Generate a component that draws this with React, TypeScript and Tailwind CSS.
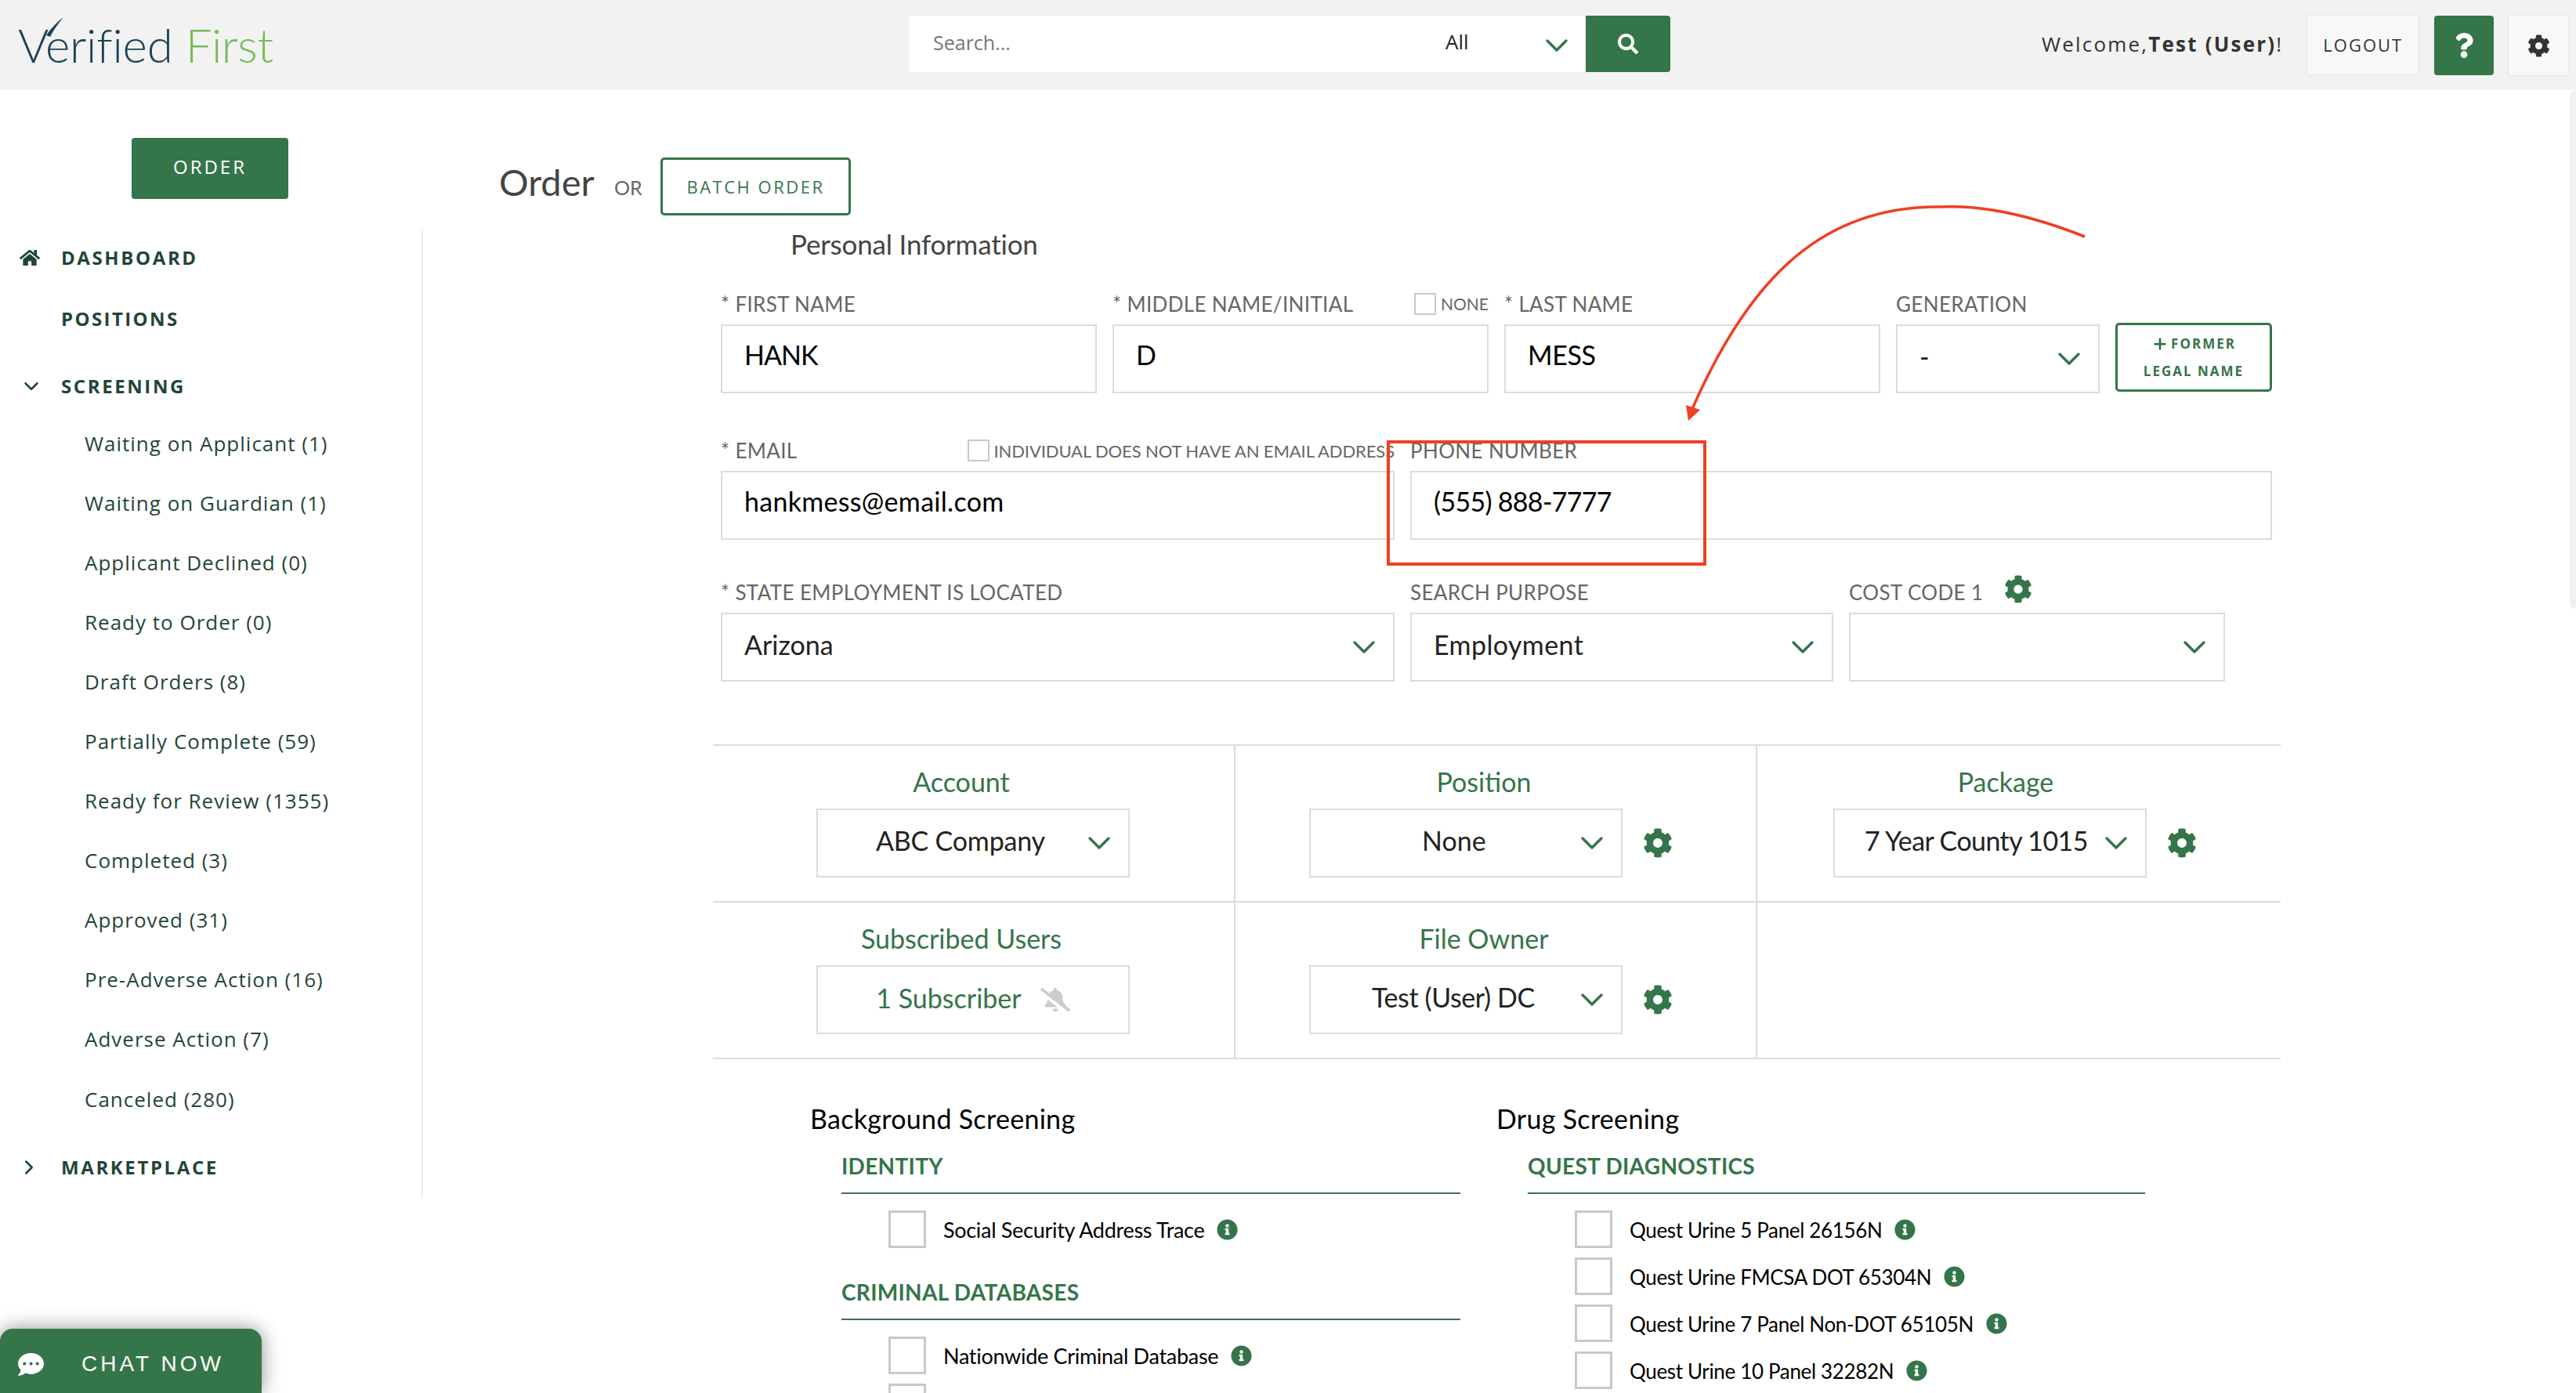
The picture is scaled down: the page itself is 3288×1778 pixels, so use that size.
/**
 * App - Verified First order page
 */

import type { ReactNode } from 'react';
import { ChevronDown, ChevronRight, Plus } from 'lucide-react';
import { FaBellSlash, FaCog, FaCommentDots, FaHome, FaInfoCircle, FaQuestion, FaSearch } from 'react-icons/fa';

const SCREENING_ITEMS = [
  'Waiting on Applicant (1)',
  'Waiting on Guardian (1)',
  'Applicant Declined (0)',
  'Ready to Order (0)',
  'Draft Orders (8)',
  'Partially Complete (59)',
  'Ready for Review (1355)',
  'Completed (3)',
  'Approved (31)',
  'Pre-Adverse Action (16)',
  'Adverse Action (7)',
  'Canceled (280)',
];

const QUEST_ITEMS = [
  'Quest Urine 5 Panel 26156N',
  'Quest Urine FMCSA DOT 65304N',
  'Quest Urine 7 Panel Non-DOT 65105N',
  'Quest Urine 10 Panel 32282N',
];

function Chevron({ className = '' }: { className?: string }) {
  return <ChevronDown size={48} strokeWidth={1.7} className={`shrink-0 text-[#35754a] ${className}`} />;
}

function Label({ children, className = '' }: { children: ReactNode; className?: string }) {
  return <div className={`h-[30px] text-[26px] leading-[30px] tracking-[0.35px] text-[#666] whitespace-nowrap ${className}`}>{children}</div>;
}

function SmallCheck() {
  return <span className="inline-block h-[28px] w-[28px] shrink-0 border-2 border-[#c9c9c9] bg-white" />;
}

function TextBox({ value, className = '' }: { value: string; className?: string }) {
  return (
    <div className={`flex h-[88px] items-center border-2 border-[#dcdcdc] pb-[12px] pl-[28px] text-[34px] text-black ${className}`}>
      {value}
    </div>
  );
}

function SelectBox({ value, className = '' }: { value: string; className?: string }) {
  return (
    <div className={`flex h-[88px] items-center justify-between border-2 border-[#dcdcdc] pl-[28px] pr-[13px] text-[34px] text-[#222] ${className}`}>
      <span className="pb-[8px]">{value}</span>
      <Chevron />
    </div>
  );
}

function CellSelect({ value, textClass }: { value: string; textClass: string }) {
  return (
    <div className="flex h-[88px] w-[400px] items-center justify-between border-2 border-[#dcdcdc] pr-[13px] text-[34px] text-[#222]">
      <span className={`pb-[8px] whitespace-nowrap ${textClass}`}>{value}</span>
      <Chevron />
    </div>
  );
}

function Cell({ title, children, width, indent, border = true }: { title?: string; children?: ReactNode; width: string; indent: string; border?: boolean }) {
  return (
    <div className={`${width} ${border ? 'border-r-2 border-[#dcdcdc]' : ''}`}>
      {title && (
        <>
          <div className="mt-[26px] h-[40px] w-[634px] text-center text-[34px] leading-[40px] text-[#35754a]">{title}</div>
          <div className={`mt-[14px] flex items-center gap-[26px] ${indent}`}>{children}</div>
        </>
      )}
    </div>
  );
}

function CheckRow({ label, className = '', textClass = 'text-[27px] tracking-[-0.3px]' }: { label: string; className?: string; textClass?: string }) {
  return (
    <div className={`flex h-[48px] items-center pl-[60px] ${className}`}>
      <span className="h-[48px] w-[48px] shrink-0 border-[3px] border-[#c8c8c8] bg-white" />
      <span className={`ml-[22px] whitespace-nowrap pt-[2px] text-black ${textClass}`}>{label}</span>
      <FaInfoCircle size={27} className="ml-[16px] shrink-0 text-[#35754a]" />
    </div>
  );
}

function GroupHeading({ children, className = '' }: { children: ReactNode; className?: string }) {
  return (
    <div className={`border-b-2 border-[#35754a] pb-[19px] ${className}`}>
      <div className="h-[30px] text-[28px] font-bold leading-[30px] tracking-[0.3px] text-[#35754a]">{children}</div>
    </div>
  );
}

export default function App() {
  return (
    <div className="relative h-screen w-full overflow-hidden bg-white font-['Lato','Open_Sans',sans-serif]">
      {/* Top bar */}
      <header className="flex h-[115px] items-start bg-[#f2f2f2]">
        <div className="relative ml-[23px] mt-[21px] flex w-[1137px] font-light">
          <div className="text-[60px] leading-[72px] tracking-[-0.2px] text-[#1b4257]">
            Verified <span className="tracking-[-0.4px] text-[#76bc57]">First</span>
          </div>
          <svg className="absolute left-0 top-0" width="60" height="40" viewBox="0 0 60 40">
            <path d="M36 24 C42 15 50 7 58 1 C52 8 46 16 41 26 Z" fill="#1b4257" />
          </svg>
        </div>
        <div className="mt-[20px] flex h-[72px] w-[972px] items-stretch bg-white">
          <div className="flex w-[685px] items-center pb-[2px] pl-[31px] font-['Open_Sans',sans-serif] text-[25px] text-[#777]">Search...</div>
          <div className="flex w-[179px] pb-[8px] font-['Open_Sans',sans-serif] text-[26px] text-[#222]">
            <span className="mt-[14px]">All</span>
            <Chevron className="ml-auto mr-[13px] mt-[14px]" />
          </div>
          <div className="flex w-[108px] items-center justify-center rounded-r-[4px] bg-[#35754a] text-white">
            <FaSearch size={26} />
          </div>
        </div>
        <div className="mt-[36px] ml-[474px] whitespace-nowrap font-['Open_Sans',sans-serif] text-[26px] leading-[40px] tracking-[2.2px] text-[#333]">
          Welcome,<b>Test (User)</b>!
        </div>
        <div className="ml-[29px] mt-[18px] flex h-[79px] w-[146px] items-center justify-center rounded-[6px] border-2 border-[#ebebeb] bg-[#f8f8f8] font-['Open_Sans',sans-serif] text-[22px] tracking-[2px] text-[#333]">
          LOGOUT
        </div>
        <div className="ml-[18px] mt-[20px] flex h-[76px] w-[76px] items-center justify-center rounded-[4px] bg-[#35754a] text-white">
          <FaQuestion size={32} />
        </div>
        <div className="ml-[17px] mt-[18px] flex h-[80px] w-[80px] items-center justify-center rounded-[6px] border-2 border-[#ebebeb] bg-[#f8f8f8] text-[#333]">
          <FaCog size={29} />
        </div>
      </header>

      <div className="flex">
        {/* Sidebar */}
        <aside className="w-[540px] shrink-0 font-['Open_Sans',sans-serif]">
          <div className="ml-[168px] mt-[61px] flex h-[78px] w-[200px] items-center justify-center rounded-[4px] bg-[#35754a] pb-[4px] text-[24px] tracking-[3px] text-white">
            ORDER
          </div>
          <nav className="mt-[40px] h-[1234px] border-r-2 border-[#ececec] text-[#1f4636]">
            <div className="relative flex h-[70px] items-center pl-[78px] text-[24px] font-bold tracking-[2.6px]">
              <FaHome size={26} className="absolute left-[25px]" />
              DASHBOARD
            </div>
            <div className="flex h-[86px] items-center pl-[78px] text-[24px] font-bold tracking-[2.4px]">POSITIONS</div>
            <div className="relative mt-[8px] flex h-[70px] items-center pl-[78px] text-[24px] font-bold tracking-[2.6px]">
              <ChevronDown size={30} strokeWidth={2} className="absolute left-[25px]" />
              SCREENING
            </div>
            {SCREENING_ITEMS.map((item) => (
              <div key={item} className="flex h-[76.1px] items-center pl-[108px] text-[26px] tracking-[1px]">
                {item}
              </div>
            ))}
            <div className="relative mt-[14px] flex h-[70px] items-center pl-[78px] text-[24px] font-bold tracking-[2.6px]">
              <ChevronRight size={30} strokeWidth={2} className="absolute left-[22px]" />
              MARKETPLACE
            </div>
          </nav>
        </aside>

        {/* Main form */}
        <main className="pl-[97px] pt-[86px]">
          <div className="flex h-[74px] items-center">
            <h1 className="w-[147px] pb-[12px] text-[47px] text-[#444]">Order</h1>
            <span className="w-[59px] pt-[4px] text-[25px] text-[#666]">OR</span>
            <div className="flex h-[74px] w-[243px] items-center justify-center rounded-[5px] border-[3px] border-[#35754a] font-['Open_Sans',sans-serif] text-[22px] tracking-[2.5px] text-[#35754a]">
              BATCH ORDER
            </div>
          </div>

          <h2 className="ml-[372px] mt-[14px] h-[44px] text-[35px] leading-[44px] tracking-[-0.2px] text-[#444]">Personal Information</h2>

          <div className="ml-[283px] w-[1980px]">
            {/* Name row */}
            <div className="mt-[40px] flex gap-[20px]">
              <div className="w-[480px]">
                <Label>* FIRST NAME</Label>
                <TextBox value="HANK" className="mt-[11px] tracking-[-1px]" />
              </div>
              <div className="w-[480px]">
                <div className="flex justify-between">
                  <Label>* MIDDLE NAME/INITIAL</Label>
                  <div className="flex h-[30px] items-center gap-[6px] text-[21px] text-[#666]">
                    <SmallCheck />
                    NONE
                  </div>
                </div>
                <TextBox value="D" className="mt-[11px]" />
              </div>
              <div className="w-[480px]">
                <Label>* LAST NAME</Label>
                <TextBox value="MESS" className="mt-[11px] tracking-[-0.4px]" />
              </div>
              <div className="w-[260px]">
                <Label>GENERATION</Label>
                <SelectBox value="-" className="mt-[11px]" />
              </div>
              <div className="mt-[39px] flex h-[88px] w-[200px] flex-col items-center justify-center gap-[14px] rounded-[5px] border-[3px] border-[#35754a] font-['Open_Sans',sans-serif] text-[17px] font-bold leading-[20px] tracking-[2px] text-[#35754a]">
                <span className="flex items-center gap-[3px]">
                  <Plus size={22} strokeWidth={3} />
                  FORMER
                </span>
                <span>LEGAL NAME</span>
              </div>
            </div>

            {/* Contact row */}
            <div className="mt-[58px] flex gap-[20px]">
              <div className="w-[860px]">
                <div className="flex h-[30px]">
                  <Label className="w-[318px]">* EMAIL</Label>
                  <div className="ml-[5px] flex h-[30px] items-center gap-[5px] whitespace-nowrap text-[22px] tracking-[-0.1px] text-[#666]">
                    <SmallCheck />
                    INDIVIDUAL DOES NOT HAVE AN EMAIL ADDRESS
                  </div>
                </div>
                <TextBox value="hankmess@email.com" className="mt-[11px] tracking-[0.3px]" />
              </div>
              <div className="w-[1100px]">
                <Label>PHONE NUMBER</Label>
                <TextBox value="(555) 888-7777" className="mt-[11px] tracking-[-0.7px]" />
              </div>
            </div>

            {/* Location row */}
            <div className="mt-[52px] flex gap-[20px]">
              <div className="w-[860px]">
                <Label>* STATE EMPLOYMENT IS LOCATED</Label>
                <SelectBox value="Arizona" className="mt-[11px]" />
              </div>
              <div className="w-[540px]">
                <Label>SEARCH PURPOSE</Label>
                <SelectBox value="Employment" className="mt-[11px] tracking-[0.4px]" />
              </div>
              <div className="w-[480px]">
                <div className="flex h-[30px] items-center gap-[27px]">
                  <Label>COST CODE 1</Label>
                  <FaCog size={36} className="mb-[8px] text-[#35754a]" />
                </div>
                <SelectBox value="" className="mt-[11px]" />
              </div>
            </div>

            {/* Account / position / package grid */}
            <div className="ml-[-10px] mt-[80px] w-[2001px] border-y-2 border-[#dcdcdc]">
              <div className="flex h-[198px]">
                <Cell title="Account" width="w-[667px]" indent="ml-[132px]">
                  <CellSelect value="ABC Company" textClass="pl-[74px] tracking-[-0.2px]" />
                </Cell>
                <Cell title="Position" width="w-[666px]" indent="ml-[94px]">
                  <CellSelect value="None" textClass="pl-[142px]" />
                  <FaCog size={38} className="text-[#35754a]" />
                </Cell>
                <Cell title="Package" width="w-[668px]" indent="ml-[97px]" border={false}>
                  <CellSelect value="7 Year County 1015" textClass="pl-[38px] tracking-[-0.6px]" />
                  <FaCog size={38} className="text-[#35754a]" />
                </Cell>
              </div>
              <div className="flex h-[200px] border-t-2 border-[#dcdcdc]">
                <Cell title="Subscribed Users" width="w-[667px]" indent="ml-[132px]">
                  <div className="flex h-[88px] w-[400px] items-center justify-center gap-[24px] border-2 border-[#dcdcdc] text-[34px] text-[#35754a]">
                    <span className="pb-[6px]">1 Subscriber</span>
                    <FaBellSlash size={38} className="text-[#cccccc]" />
                  </div>
                </Cell>
                <Cell title="File Owner" width="w-[666px]" indent="ml-[94px]">
                  <CellSelect value="Test (User) DC" textClass="pl-[78px] tracking-[-0.4px]" />
                  <FaCog size={38} className="text-[#35754a]" />
                </Cell>
                <Cell width="w-[668px]" indent="" border={false} />
              </div>
            </div>

            {/* Screening lists */}
            <div className="ml-[114px] mt-[54px] flex">
              <div className="w-[876px]">
                <h3 className="h-[44px] text-[34px] leading-[44px] tracking-[0.3px] text-black">Background Screening</h3>
                <div className="ml-[40px] w-[790px]">
                  <GroupHeading className="mt-[23px]">IDENTITY</GroupHeading>
                  <CheckRow label="Social Security Address Trace" className="mt-[21px]" />
                  <GroupHeading className="mt-[41px]">CRIMINAL DATABASES</GroupHeading>
                  <CheckRow label="Nationwide Criminal Database" className="mt-[21px]" />
                  <div className="ml-[60px] mt-[12px] h-[48px] w-[48px] border-[3px] border-[#c8c8c8]" />
                </div>
              </div>
              <div className="w-[830px]">
                <h3 className="h-[44px] text-[34px] leading-[44px] tracking-[0.3px] text-black">Drug Screening</h3>
                <div className="ml-[40px] w-[788px]">
                  <GroupHeading className="mt-[23px]">QUEST DIAGNOSTICS</GroupHeading>
                  <div className="mt-[21px] flex flex-col gap-[12px]">
                    {QUEST_ITEMS.map((item) => (
                      <CheckRow key={item} label={item} textClass="text-[26px] tracking-[-0.35px]" />
                    ))}
                  </div>
                </div>
              </div>
            </div>
          </div>
        </main>
      </div>

      {/* Scrollbar thumb */}
      <div className="absolute right-0 top-[115px] h-[662px] w-[8px] rounded-l-[8px] bg-[#f1f1f1]" />

      {/* Chat widget */}
      <div className="absolute bottom-0 left-0 flex h-[82px] w-[334px] items-center rounded-t-[16px] bg-[#35754a] pl-[23px] pt-[8px] text-white shadow-[0_0_24px_rgba(0,0,0,0.45)]">
        <FaCommentDots size={33} />
        <span className="ml-[48px] font-['Liberation_Sans',sans-serif] text-[28px] tracking-[4px]">CHAT NOW</span>
      </div>

      {/* Red annotation */}
      <div className="absolute left-[1770px] top-[562px] h-[160px] w-[408px] border-[4px] border-[#ee4023]" />
      <svg className="pointer-events-none absolute left-0 top-0" width="3288" height="1778" viewBox="0 0 3288 1778" fill="none">
        <path d="M2661 302 C2580 270 2520 262 2478 264 C2330 262 2235 350 2160 522" stroke="#ee4023" strokeWidth="3.5" />
        <path d="M2152 517 L2170 523 L2155 537 Z" fill="#ee4023" />
      </svg>
    </div>
  );
}
